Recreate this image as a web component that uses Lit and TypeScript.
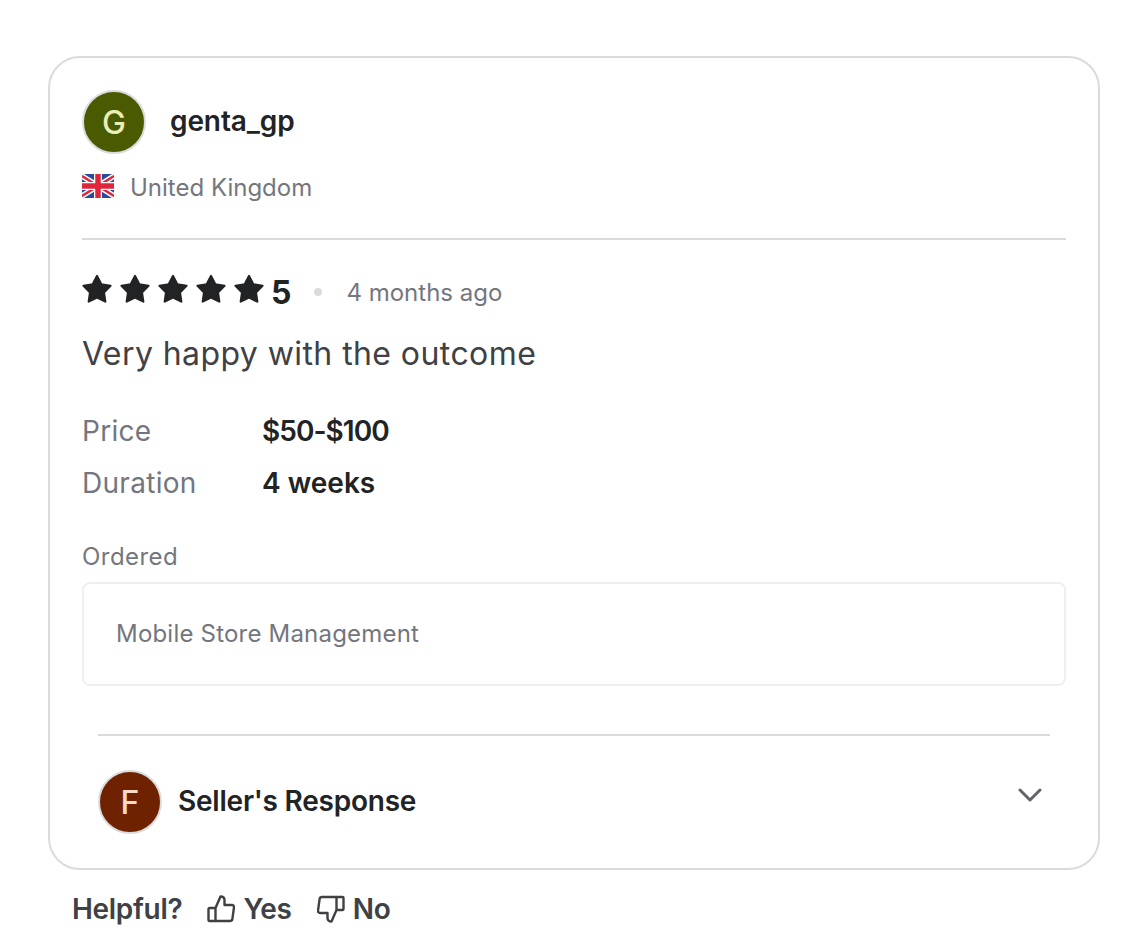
import { LitElement, html, css, svg } from 'lit';
import { customElement } from 'lit/decorators.js';

const star = svg`<path d="M15 2L19.290 10.290 28.500 11.750 21.940 18.460 23.300 27.600 15 23.500 6.700 27.600 8.060 18.460 1.500 11.750 10.710 10.290z"/>`;

@customElement('app-root')
export class AppRoot extends LitElement {
  static styles = css`
    :host {
      display: block;
      font-family: 'Inter', 'Liberation Sans', sans-serif;
      color: #222325;
      background: #fff;
      height: 942px;
      overflow: hidden;
    }
    .page {
      padding: 56px 36px 0 48px;
    }
    .card {
      border: 2px solid #dadbdd;
      border-radius: 32px;
      padding: 32px 32px 34px;
      height: 814px;
      box-sizing: border-box;
    }
    .user {
      display: flex;
      align-items: center;
      gap: 24px;
    }
    .avatar {
      width: 64px;
      height: 64px;
      box-sizing: border-box;
      border: 2px solid #dadbdd;
      border-radius: 50%;
      display: flex;
      align-items: center;
      justify-content: center;
      font-size: 32px;
      font-weight: 500;
      flex: none;
    }
    .avatar.g {
      background: #4a5a00;
      color: #e8f0b8;
    }
    .avatar.f {
      background: #6f2200;
      color: #fbd9cd;
    }
    .name {
      font-size: 28px;
      font-weight: 600;
      letter-spacing: -0.1px;
      padding-bottom: 2px;
    }
    .country {
      display: flex;
      align-items: center;
      gap: 16px;
      margin-top: 18px;
      font-size: 24px;
      line-height: 32px;
      color: #74767e;
    }
    .flag {
      display: block;
      flex: none;
      margin-bottom: 4px;
    }
    .rule {
      height: 2px;
      background: #dadbdd;
    }
    .country + .rule {
      margin-top: 34px;
    }
    .rating {
      display: flex;
      align-items: center;
      margin-top: 34px;
      height: 36px;
    }
    .stars {
      display: flex;
      gap: 8px;
      fill: #222325;
      stroke: #222325;
      stroke-width: 2.200;
      stroke-linejoin: round;
      margin-bottom: 6px;
    }
    .stars svg {
      display: block;
    }
    .score {
      font-size: 32px;
      font-weight: 700;
      margin-left: 7px;
    }
    .dot {
      width: 8px;
      height: 8px;
      border-radius: 50%;
      background: #dadbdd;
      margin: 0 24px 0 23px;
    }
    .ago {
      font-size: 24px;
      color: #74767e;
    }
    .title {
      margin: 22px 0 0;
      font-size: 32px;
      line-height: 44px;
      font-weight: 400;
      letter-spacing: 0.42px;
      color: #404145;
    }
    .facts {
      display: grid;
      grid-template-columns: 180px auto;
      row-gap: 12px;
      margin-top: 35px;
      font-size: 28px;
      line-height: 40px;
    }
    .fact-label {
      color: #74767e;
      letter-spacing: 0.3px;
    }
    .fact-value {
      font-weight: 600;
    }
    .fact-value.price {
      letter-spacing: -0.95px;
    }
    .ordered-label {
      margin-top: 38px;
      font-size: 24px;
      line-height: 32px;
      letter-spacing: 0.45px;
      color: #74767e;
    }
    .ordered {
      margin-top: 9px;
      height: 104px;
      box-sizing: border-box;
      border: 2px solid #efeff0;
      border-radius: 8px;
      padding: 0 32px 2px;
      display: flex;
      align-items: center;
      font-size: 24px;
      letter-spacing: 0.2px;
      color: #74767e;
    }
    .response {
      margin: 48px 16px 0;
    }
    .response-row {
      display: flex;
      align-items: center;
      gap: 16px;
      margin-top: 34px;
    }
    .response-title {
      font-size: 28px;
      font-weight: 600;
      letter-spacing: -0.22px;
      padding-bottom: 3px;
      flex: 1;
    }
    .chevron {
      display: block;
      margin: 0 8px 14px 0;
    }
    .helpful {
      display: flex;
      align-items: center;
      margin: 19px 0 0 24px;
      font-size: 28px;
      line-height: 40px;
      font-weight: 600;
      letter-spacing: -0.3px;
      color: #404145;
    }
    .vote {
      display: flex;
      align-items: center;
      gap: 8px;
      margin-left: 25px;
    }
    .vote + .vote {
      margin-left: 25px;
    }
    .vote svg {
      display: block;
      fill: none;
      stroke: #404145;
      stroke-width: 2.400;
      stroke-linejoin: round;
      stroke-linecap: round;
    }
  `;

  render() {
    return html`
      <div class="page">
        <div class="card">
          <div class="user">
            <div class="avatar g">G</div>
            <div class="name">genta_gp</div>
          </div>
          <div class="country">
            <svg class="flag" width="32" height="24" viewBox="0 0 32 24">
              <rect width="32" height="24" rx="3" fill="#2a4a9a" />
              <path d="M0 2L32 22M32 2L0 22" stroke="#fff" stroke-width="5.500" />
              <path d="M0 2L32 22M32 2L0 22" stroke="#e0263c" stroke-width="2.500" />
              <path d="M16 0V24M0 12H32" stroke="#fff" stroke-width="8" />
              <path d="M16 0V24M0 12H32" stroke="#e0263c" stroke-width="5.500" />
            </svg>
            United Kingdom
          </div>
          <div class="rule"></div>
          <div class="rating">
            <div class="stars">
              ${[0, 1, 2, 3, 4].map(() => html`<svg width="30" height="30" viewBox="0 0 30 30">${star}</svg>`)}
            </div>
            <span class="score">5</span>
            <span class="dot"></span>
            <span class="ago">4 months ago</span>
          </div>
          <p class="title">Very happy with the outcome</p>
          <div class="facts">
            <div class="fact-label">Price</div>
            <div class="fact-value price">$50-$100</div>
            <div class="fact-label">Duration</div>
            <div class="fact-value">4 weeks</div>
          </div>
          <div class="ordered-label">Ordered</div>
          <div class="ordered">Mobile Store Management</div>
          <div class="response">
            <div class="rule"></div>
            <div class="response-row">
              <div class="avatar f">F</div>
              <div class="response-title">Seller's Response</div>
              <svg class="chevron" width="24" height="14" viewBox="0 0 24 14" fill="none" stroke="#62646a" stroke-width="3" stroke-linecap="round" stroke-linejoin="round">
                <path d="M2 2l10 10L22 2" />
              </svg>
            </div>
          </div>
        </div>
        <div class="helpful">
          <span>Helpful?</span>
          <span class="vote">
            <svg width="28" height="28" viewBox="0 0 28 28">
              <path d="M8.500 13v13H2.500a1 1 0 0 1-1-1V14a1 1 0 0 1 1-1zM8.500 13l5-11.500c2.500 0 4 1.500 4 3.500v5h7.500a2 2 0 0 1 2 2.300l-1.600 11.500a2.500 2.500 0 0 1-2.500 2.200H8.500" />
            </svg>
            Yes
          </span>
          <span class="vote">
            <svg width="28" height="28" viewBox="0 0 28 28">
              <path d="M19.500 15V2h6a1 1 0 0 1 1 1v11a1 1 0 0 1-1 1zM19.500 15l-5 11.500c-2.500 0-4-1.500-4-3.500v-5H3a2 2 0 0 1-2-2.300L2.600 4.200A2.500 2.500 0 0 1 5.100 2h14.400" />
            </svg>
            No
          </span>
        </div>
      </div>
    `;
  }
}
